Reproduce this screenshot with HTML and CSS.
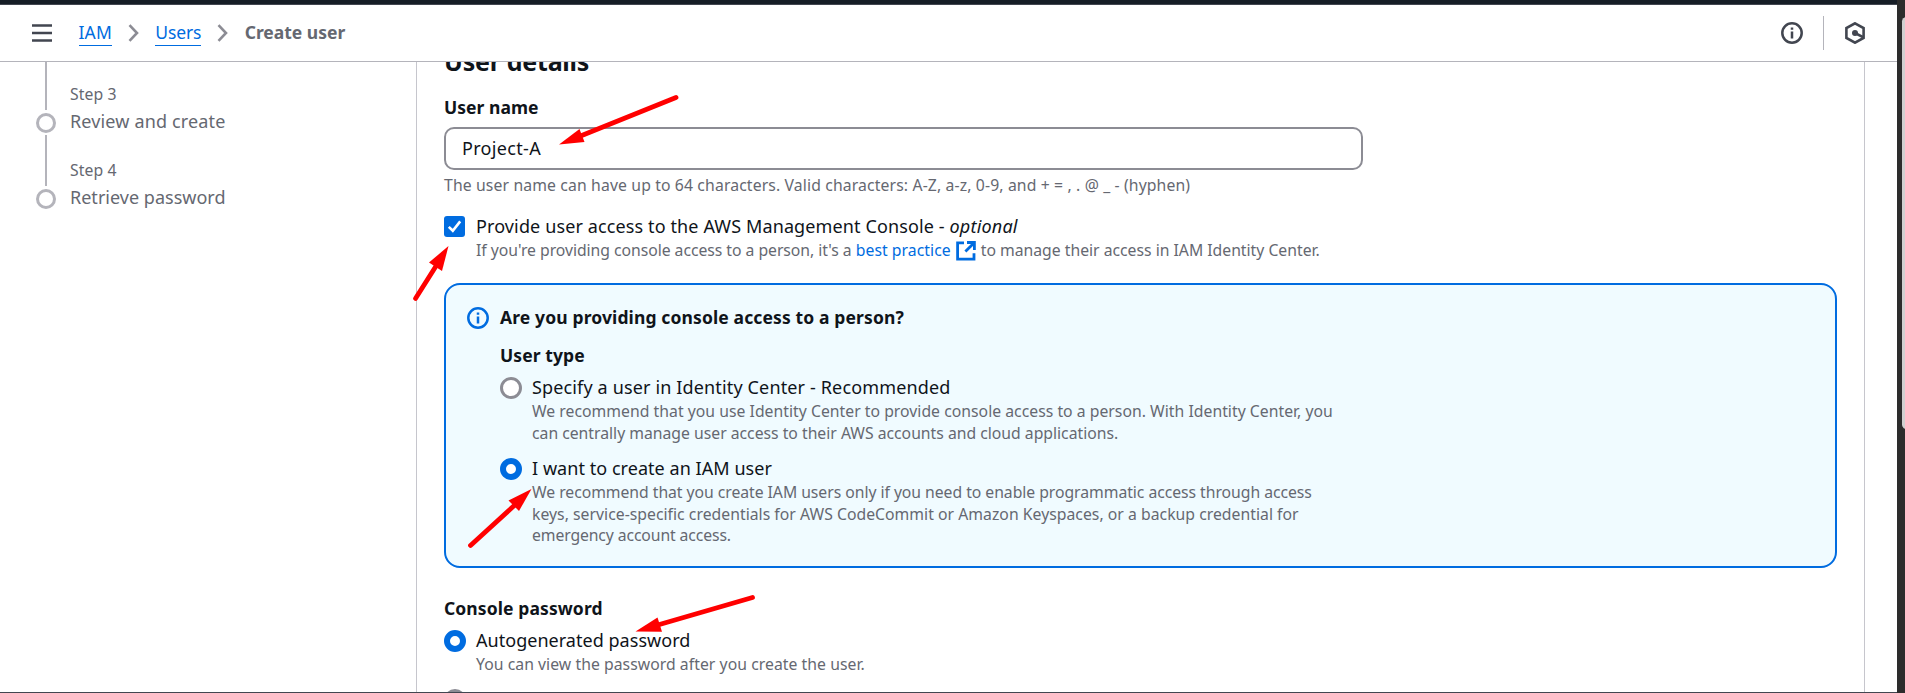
FILE: index.html
```
<!DOCTYPE html>
<html lang="en">
<head>
<meta charset="utf-8">
<title>Create user | IAM</title>
<link rel="stylesheet" href="styles.css">
</head>
<body>
<div class="frame">
  <div class="page">
    <div class="topline"></div>
    <header class="header">
      <svg class="menu" width="20" height="20" viewBox="0 0 20 20"><path d="M0 2.5h20M0 10h20M0 17.5h20"/></svg>
      <nav class="crumbs">
        <a class="iam">IAM</a>
        <svg class="chevron" width="11" height="18" viewBox="0 0 11 18"><path d="M1.5 1.2L9 9L1.5 16.8"/></svg>
        <a class="users">Users</a>
        <svg class="chevron" width="11" height="18" viewBox="0 0 11 18"><path d="M1.5 1.2L9 9L1.5 16.8"/></svg>
        <b>Create user</b>
      </nav>
      <div class="tools">
        <svg class="info" width="22" height="22" viewBox="0 0 22 22"><circle cx="11" cy="11" r="9.7"/><path d="M11 9.4v7M11 5.4v2.3"/></svg>
        <span class="divider"></span>
        <svg class="hex" width="20" height="22" viewBox="0 0 20 22"><path d="M10 1.3L18.6 6.1V15.9L10 20.7L1.4 15.9V6.1Z"/><path d="M10 11L18 15.2"/><circle cx="10" cy="11" r="3"/></svg>
      </div>
    </header>
    <div class="body">
      <aside class="steps">
        <div class="step">
          <div class="rail"><i class="line first"></i><i class="dot"></i></div>
          <div class="label"><small>Step 3</small><span class="review">Review and create</span></div>
        </div>
        <div class="step">
          <div class="rail"><i class="line"></i><i class="dot"></i></div>
          <div class="label"><small>Step 4</small><span class="retrieve">Retrieve password</span></div>
        </div>
      </aside>
      <main class="card">
        <h2>User details</h2>
        <div class="title name">User name</div>
        <div class="input">Project-A</div>
        <div class="hint h-name">The user name can have up to 64 characters. Valid characters: A-Z, a-z, 0-9, and + = , . @ _ - (hyphen)</div>
        <div class="option access">
          <span class="check"><svg width="21" height="21" viewBox="0 0 21 21"><path d="M4.8 10.9L8.8 14.8L16.2 5.4"/></svg></span>
          <div>
            <div class="text"><span class="provide">Provide user access to the AWS Management Console - </span><em>optional</em></div>
            <div class="hint"><span class="h-if">If you're providing console access to a person, it's a </span><a class="best">best practice</a><svg class="external" width="20" height="20" viewBox="0 0 20 20"><path d="M8 1.8H1.6V18.2H18V12.2"/><path d="M11 1.5H18.4V8.9M18 1.9L9.4 10.5"/></svg><span class="h-to">to manage their access in IAM Identity Center.</span></div>
          </div>
        </div>
        <section class="alert">
          <svg class="info blue" width="22" height="22" viewBox="0 0 22 22"><circle cx="11" cy="11" r="9.7"/><path d="M11 9.4v7M11 5.4v2.3"/></svg>
          <div>
            <div class="title person">Are you providing console access to a person?</div>
            <div class="title type">User type</div>
            <div class="option specify">
              <span class="radio"></span>
              <div>
                <div class="text t-specify">Specify a user in Identity Center - Recommended</div>
                <div class="hint h-we">We recommend that you use Identity Center to provide console access to a person. With Identity Center, you</div>
                <div class="hint h-can">can centrally manage user access to their AWS accounts and cloud applications.</div>
              </div>
            </div>
            <div class="option iamuser">
              <span class="radio on"></span>
              <div>
                <div class="text t-want">I want to create an IAM user</div>
                <div class="hint h-rec">We recommend that you create IAM users only if you need to enable programmatic access through access</div>
                <div class="hint h-keys">keys, service-specific credentials for AWS CodeCommit or Amazon Keyspaces, or a backup credential for</div>
                <div class="hint h-emer">emergency account access.</div>
              </div>
            </div>
          </div>
        </section>
        <div class="title console">Console password</div>
        <div class="option">
          <span class="radio on"></span>
          <div>
            <div class="text t-auto">Autogenerated password</div>
            <div class="hint h-view">You can view the password after you create the user.</div>
          </div>
        </div>
        <div class="option next"><span class="radio"></span></div>
      </main>
    </div>
    <div class="bottomline"></div>
  </div>
  <div class="scroll"><div class="thumb"></div></div>
</div>
<svg class="arrows" width="1905" height="693" viewBox="0 0 1905 693">
  <path class="shaft" d="M676 97.5L578 137"/><path class="head" d="M559 144.5L579.5 129L584.5 142Z"/>
  <path class="shaft" d="M415.5 298.5L437 264.5"/><path class="head" d="M448.5 246L429 262.5L442 271Z"/>
  <path class="shaft" d="M470.5 545.5L517 503"/><path class="head" d="M531.5 489L508.5 500.5L519 511Z"/>
  <path class="shaft" d="M752.5 597.5L656 625.5"/><path class="head" d="M635.5 631.5L657.5 617.5L662 631.8Z"/>
</svg>
</body>
</html>
```
FILE: styles.css
```
* { box-sizing: border-box; }
body {
  margin: 0;
  height: 693px;
  overflow: hidden;
  background: #fff;
  color: #0f141a;
  font: 18px/25px "Noto Sans", "Open Sans", sans-serif;
  white-space: nowrap;
}
svg { display: block; flex: none; fill: none; }
a { color: #006ce0; }
.frame { display: flex; height: 693px; }
.page { width: 1897px; display: flex; flex-direction: column; }
.topline { height: 5px; flex: none; background: #161d26; border-bottom: 1px solid #424650; }
.header {
  height: 57px;
  flex: none;
  display: flex;
  align-items: center;
  padding: 0 32px;
  border-bottom: 1px solid #b4b4bb;
}
.menu { stroke: #424650; stroke-width: 2.5; }
.crumbs { display: flex; align-items: center; margin-left: 26.5px; font-size: 17.5px; }
.crumbs a { height: 25px; line-height: 23px; border-bottom: 1px solid #006ce0; }
.iam { width: 33.4px; letter-spacing: 0.133px; }
.users { width: 46px; letter-spacing: -0.131px; }
.crumbs b { color: #656871; line-height: 23px; padding-bottom: 2px; }
.chevron { margin: 0 16.2px; stroke: #8c8c94; stroke-width: 2.6; }
.tools { display: flex; align-items: center; margin-left: auto; margin-right: 0.5px; }
.info { stroke: #424650; stroke-width: 2.5; }
.info.blue { stroke: #006ce0; }
.divider { width: 1px; height: 34px; background: #b4b4bb; margin: 0 21px 0 20px; }
.hex { stroke: #424650; stroke-width: 2.6; }
.hex circle { fill: #424650; stroke: none; }

.body { flex: 1; min-height: 0; display: flex; overflow: hidden; }
.steps { width: 416px; padding-left: 36px; flex: none; }
.step { display: flex; gap: 14px; height: 76px; }
.step:first-child { height: 70px; }
.rail { width: 20px; display: flex; flex-direction: column; align-items: center; }
.line { width: 2px; height: 51px; margin-top: 3px; background: #b4b4bb; }
.line.first { height: 48px; margin-top: 0; }
.dot { width: 20px; height: 20px; margin-top: 3px; margin-bottom: -1px; border: 3px solid #b4b4bb; border-radius: 50%; }
.label { display: flex; flex-direction: column; padding-top: 27px; color: #656871; }
.step:first-child .label { padding-top: 21px; }
small { font-size: 15.75px; line-height: 22px; letter-spacing: 0.08px; margin-bottom: 4px; }
.review { letter-spacing: 0.148px; }
.retrieve { letter-spacing: 0.012px; }

.card {
  width: 1449px;
  border: solid #c6c6cd;
  border-width: 0 1px;
  padding: 0 27px;
}
h2 { font-size: 25px; line-height: 30px; margin: -16px 0 19px; letter-spacing: -0.25px; }
.title { font-size: 17.5px; font-weight: 700; letter-spacing: 0.1px; }
.name { letter-spacing: 0.033px; }
.input {
  width: 919px;
  height: 43px;
  margin: 7px 0 4px;
  padding: 7px 16px;
  border: 2px solid #8c8c94;
  border-radius: 10px;
  letter-spacing: 0.322px;
}
.hint { color: #656871; font-size: 15.75px; line-height: 22px; height: 22px; }
.option { display: flex; gap: 11px; }
.access { margin-top: 18px; }
.access .hint { display: flex; white-space: pre; }
.access .text { white-space: pre; }
.check { width: 21px; height: 21px; margin-top: 2px; background: #006ce0; border-radius: 3px; flex: none; }
.check svg { stroke: #fff; stroke-width: 2.6; }
.external { stroke: #006ce0; stroke-width: 2.8; margin: 1.5px 5px 0 5px; }
.provide { letter-spacing: 0.12px; }
em { letter-spacing: 0.2px; }
.radio { width: 22px; height: 22px; margin: 2px -1px 0 0; border: 3px solid #8c8c94; border-radius: 50%; background: #fff; flex: none; }
.radio.on { border: 6.5px solid #006ce0; }
.alert {
  display: flex;
  gap: 11px;
  height: 285px;
  margin: 22px 0 28px;
  padding: 20px 21px;
  background: #f0fbff;
  border: 2px solid #006ce0;
  border-radius: 16px;
}
.alert > .info { margin-top: 2px; }
.person { letter-spacing: 0.126px; }
.type { margin: 13px 0 7px; }
.iamuser { margin-top: 12px; }
.iamuser .hint { height: 21.7px; line-height: 22.4px; }
.console { margin-bottom: 7px; }
.next { margin-top: 12px; }

.h-name { letter-spacing: 0.13px; }
.h-if { letter-spacing: -0.04px; }
.best { letter-spacing: 0.048px; }
.h-to { letter-spacing: -0.007px; }
.t-specify { letter-spacing: 0.146px; }
.h-we { letter-spacing: 0.02px; }
.h-can { letter-spacing: -0.008px; }
.t-want { letter-spacing: 0.05px; }
.h-rec { letter-spacing: -0.045px; }
.h-keys { letter-spacing: 0.025px; }
.h-emer { letter-spacing: -0.11px; }
.t-auto { letter-spacing: 0.03px; }
.h-view { letter-spacing: 0.045px; }

.bottomline { height: 1px; flex: none; background: #424650; }
.scroll { width: 8px; background: #2c2c2c; padding: 17px 0 0 5px; overflow: hidden; }
.thumb { width: 9px; height: 412px; border-radius: 5px; background: #d0d0d0; }
.arrows { position: absolute; left: 0; top: 0; }
.shaft { stroke: #f00; stroke-width: 4.8; stroke-linecap: round; }
.head { fill: #f00; }
```
